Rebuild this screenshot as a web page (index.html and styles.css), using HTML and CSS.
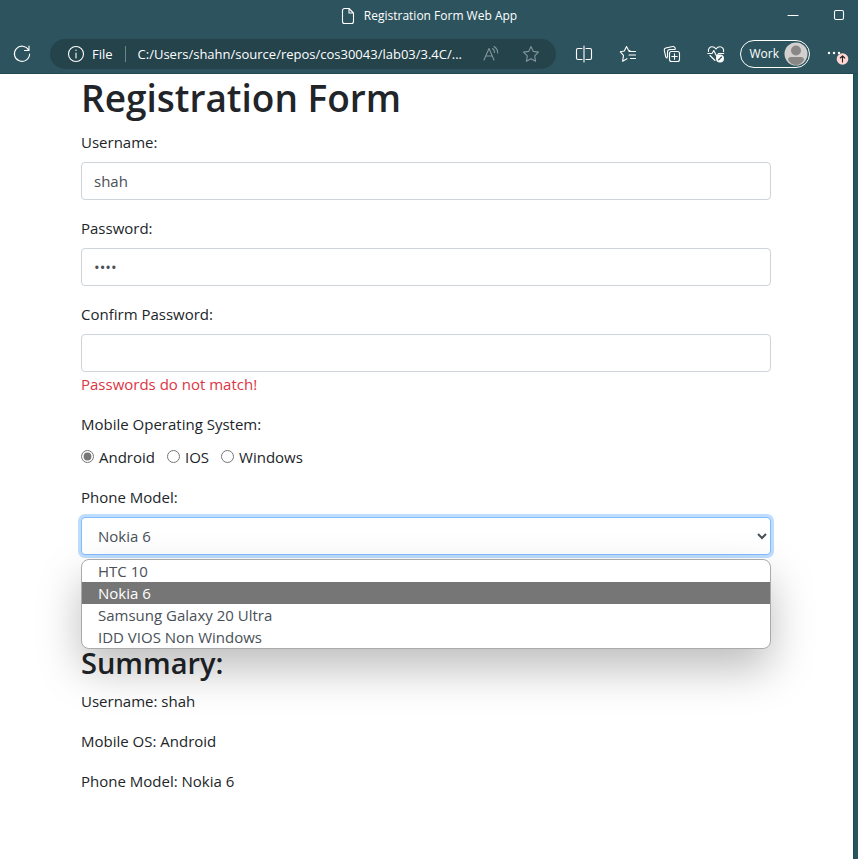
FILE: index.html
```
<!DOCTYPE html>
<html lang="en">
<head>
<meta charset="utf-8">
<meta name="viewport" content="width=device-width, initial-scale=1">
<title>Registration Form Web App</title>
<link rel="stylesheet" href="styles.css">
</head>
<body>
<header class="chrome">
  <div class="titlebar">
    <div class="tab-title">
      <svg class="doc-icon" width="14" height="18" viewBox="0 0 14 18"><path d="M3 1.500h5l4.500 4.500v8.500a2 2 0 0 1-2 2H3.500a2 2 0 0 1-2-2V3.500a2 2 0 0 1 2-2M8 1.500V6h4.500"/></svg>
      <span>Registration Form Web App</span>
    </div>
    <div class="window-buttons">
      <button type="button" aria-label="Minimize"><svg width="12" height="12" viewBox="0 0 12 12"><path d="M1 6.500h10"/></svg></button>
      <button type="button" aria-label="Maximize"><svg width="12" height="12" viewBox="0 0 12 12"><rect x="1.500" y="1.500" width="9" height="9" rx="1.500"/></svg></button>
    </div>
  </div>
  <div class="toolbar">
    <button type="button" class="reload" aria-label="Refresh"><svg width="20" height="20" viewBox="0 0 20 20"><path d="M16.600 6A7.600 7.600 0 1 0 17.600 10M17 2v4.500h-4.500"/></svg></button>
    <div class="address">
      <svg width="18" height="18" viewBox="0 0 18 18"><circle cx="9" cy="9" r="7.500"/><path d="M9 8v5M9 5v.500"/></svg>
      <span class="scheme">File</span>
      <span class="divider"></span>
      <span class="url">C:/Users/shahn/source/repos/cos30043/lab03/3.4C/...</span>
      <button type="button" class="dim" aria-label="Read aloud"><svg width="18" height="18" viewBox="0 0 18 18"><path d="M2 15L7 3.500 12 15M3.700 11h6.600M10.500 3.500q2 1.300 2 4M12 1.500q3.700 2.300 3.700 6.500"/></svg></button>
      <button type="button" class="dim star" aria-label="Add to favorites"><svg width="18" height="18" viewBox="0 0 18 18"><path d="M9 1.500l2.300 4.900 5.200.7-3.800 3.700.9 5.500L9 13.700l-4.600 2.600.9-5.500L1.500 7.100l5.200-.7z"/></svg></button>
    </div>
    <div class="actions">
      <button type="button" aria-label="Split screen"><svg width="18" height="18" viewBox="0 0 18 18"><path d="M7 3.500H3a1.500 1.500 0 0 0-1.500 1.500v8A1.500 1.500 0 0 0 3 14.500h4M11 3.500h4a1.500 1.500 0 0 1 1.500 1.500v8a1.500 1.500 0 0 1-1.500 1.500h-4M9 1v16"/></svg></button>
      <button type="button" aria-label="Favorites"><svg width="18" height="18" viewBox="0 0 18 18"><path d="M11 5.500L9.500 5.300 7.500 1.500 5.300 6 1.300 6.800 4.500 10.300 3.600 16.300 8 13.800M10 6.500h6.500M10 10h6.500M11.500 13.500h5"/></svg></button>
      <button type="button" aria-label="Collections"><svg width="18" height="18" viewBox="0 0 18 18"><rect x="6.500" y="6.500" width="10" height="10" rx="2"/><path d="M11.500 8.800v5.400M8.800 11.500h5.400M4 13q-1-.3-1.300-1.500L1.300 5.500q-.4-2 1.400-2.500l7-1.500q1.700-.3 2.300 1.200l.3 1.300M4.500 12V7q0-2.500 2.500-2.500h5"/></svg></button>
      <button type="button" aria-label="Browser essentials"><svg width="18" height="18" viewBox="0 0 18 18"><path d="M1.500 6.500C.8 3.500 3 1.800 5 1.800c2 0 3.200 1 4 2.200.8-1.200 2-2.200 4-2.200s4.300 2 3.500 4.900M3 10.500l5 5M.8 8.500H5l1.800-3 3 6 1.700-3h5.200"/><circle class="solid" cx="13" cy="13.500" r="4"/><path class="mark" d="M11.500 15l3-3"/></svg></button>
      <button type="button" class="profile"><span>Work</span><svg width="24" height="24" viewBox="0 0 24 24"><circle cx="12" cy="12" r="11.500" fill="#d2d0ce" stroke="none"/><circle cx="12" cy="8.500" r="5" fill="#8a8886" stroke="none"/><path d="M4 18q0-3 3-3h10q3 0 3 3-3 5-8 5t-8-5z" fill="#8a8886" stroke="none"/></svg></button>
      <button type="button" class="more" aria-label="Settings and more"><svg width="22" height="18" viewBox="0 0 22 18"><g fill="#fff" stroke="none"><circle cx="2" cy="6" r="1.200"/><circle cx="7" cy="6" r="1.200"/><circle cx="12" cy="6" r="1.200"/></g><circle cx="15.500" cy="12" r="5.800" fill="#ffd6d2" stroke="none"/><path d="M15.500 15v-6M13.300 11l2.200-2.200 2.200 2.200" stroke="#222"/></svg></button>
    </div>
  </div>
</header>
<main class="page">
  <div class="container">
    <h1>Registration Form</h1>
    <form>
      <div class="group">
        <label for="username">Username:</label>
        <input class="control" id="username" type="text" value="shah">
      </div>
      <div class="group">
        <label for="password">Password:</label>
        <input class="control" id="password" type="password" value="shah">
      </div>
      <div class="group">
        <label for="confirm">Confirm Password:</label>
        <input class="control" id="confirm" type="password">
        <div class="error">Passwords do not match!</div>
      </div>
      <fieldset class="group">
        <legend>Mobile Operating System:</legend>
        <div class="radios">
          <label><input type="radio" name="os" checked>Android</label>
          <label><input type="radio" name="os">IOS</label>
          <label><input type="radio" name="os">Windows</label>
        </div>
      </fieldset>
      <div class="group model">
        <label for="model">Phone Model:</label>
        <select class="control focused" id="model">
          <option>HTC 10</option>
          <option selected>Nokia 6</option>
          <option>Samsung Galaxy 20 Ultra</option>
          <option>IDD VIOS Non Windows</option>
        </select>
        <ul class="options" role="listbox" aria-label="Phone Model">
          <li role="option">HTC 10</li>
          <li role="option" class="active" aria-selected="true">Nokia 6</li>
          <li role="option">Samsung Galaxy 20 Ultra</li>
          <li role="option">IDD VIOS Non Windows</li>
        </ul>
      </div>
      <button class="submit" type="submit" aria-label="Submit"></button>
    </form>
    <section class="summary">
      <h2>Summary:</h2>
      <p>Username: shah</p>
      <p>Mobile OS: Android</p>
      <p>Phone Model: Nokia 6</p>
    </section>
  </div>
</main>
</body>
</html>
```
FILE: styles.css
```
* { box-sizing: border-box; }

body {
  margin: 0;
  min-height: 100vh;
  display: flex;
  flex-direction: column;
  background: #24565c;
  color: #212529;
  font: 400 15px/24px "Open Sans", "Noto Sans", sans-serif;
}

/* Browser window frame */
.chrome {
  background: #2d545e;
  border-bottom: 1px solid #1d4a55;
  color: #fff;
  font-size: 12px;
}
.chrome button {
  display: flex;
  align-items: center;
  padding: 0;
  border: 0;
  background: none;
  color: inherit;
  font: inherit;
}
.chrome svg {
  display: block;
  flex: none;
  fill: none;
  stroke: #fff;
  stroke-width: 1.1;
  stroke-linecap: round;
  stroke-linejoin: round;
}
.titlebar {
  position: relative;
  display: flex;
  align-items: center;
  justify-content: center;
  height: 32px;
}
.tab-title { display: flex; align-items: center; gap: 9px; }
.window-buttons {
  position: absolute;
  top: 9px;
  right: 13px;
  display: flex;
  gap: 34px;
}
.toolbar {
  display: flex;
  align-items: center;
  height: 41px;
  padding: 2px 9px 0 12px;
}
.address {
  flex: 1;
  display: flex;
  align-items: center;
  height: 30px;
  margin-left: 18px;
  padding: 0 16px 0 17px;
  border-radius: 15px;
  background: #24434b;
  font-size: 13px;
  white-space: nowrap;
}
.scheme { margin-left: 7px; }
.divider { width: 1px; height: 16px; margin: 0 12px; background: #6d868c; }
.url { flex: 1; min-width: 0; overflow: hidden; }
.chrome .dim svg { stroke: #82969b; }
.address .star { margin-left: 22px; }
.actions { display: flex; align-items: center; gap: 26px; margin-left: 19px; }
.chrome .solid { fill: #fff; stroke: none; }
.chrome .mark { stroke: #2d545e; }
.chrome .profile {
  gap: 5px;
  height: 28px;
  margin-left: -11px;
  padding: 0 1px 0 8px;
  border: 1px solid #fff;
  border-radius: 14px;
}
.chrome .more { margin-left: -9px; padding-top: 4px; }

/* Page */
.page {
  flex: 1;
  margin-right: 4px;
  padding-right: 1px;
  border-right: 1px solid #1d4a55;
  background: #fff;
}
.container { max-width: 720px; margin: 0 auto; padding: 0 15px; }
h1, h2 { margin: 0 0 8px; font-weight: 600; }
h1 { font-size: 37px; line-height: 48px; }
h2 { font-size: 29px; line-height: 36px; }
.group { margin: 0 0 16px; padding: 0; border: 0; }
.group > label, legend { display: block; margin: 0 0 8px; padding: 0; }
.control {
  display: block;
  width: 100%;
  height: 38px;
  padding: 6px 12px;
  border: 1px solid #ced4da;
  border-radius: 4px;
  background-color: #fff;
  color: #495057;
  font: inherit;
}
.focused {
  border-color: #80bdff;
  box-shadow: 0 0 0 3px #bfdeff;
}
.error { color: #dc3545; }
.radios { display: flex; gap: 12px; height: 25px; }
.radios label { display: flex; align-items: center; gap: 5px; }
.radios input { width: 13px; height: 13px; margin: 0; accent-color: #767676; }
.model { position: relative; }
.options {
  position: absolute;
  top: calc(100% + 4px);
  left: 0;
  right: 0;
  z-index: 1;
  margin: 0;
  padding: 0;
  overflow: hidden;
  border: 1px solid #aaa;
  border-radius: 8px;
  background: #fff;
  box-shadow: 0 20px 44px rgba(0, 0, 0, .26);
  color: #495057;
  line-height: 22px;
  list-style: none;
}
.options li { padding: 0 16px; }
.options .active { background: #767676; color: #fff; }
.submit {
  display: block;
  width: 80px;
  height: 38px;
  border: 1px solid #007bff;
  border-radius: 4px;
  background: #007bff;
}
.summary { margin-top: 36px; }
p { margin: 0 0 16px; }
```
